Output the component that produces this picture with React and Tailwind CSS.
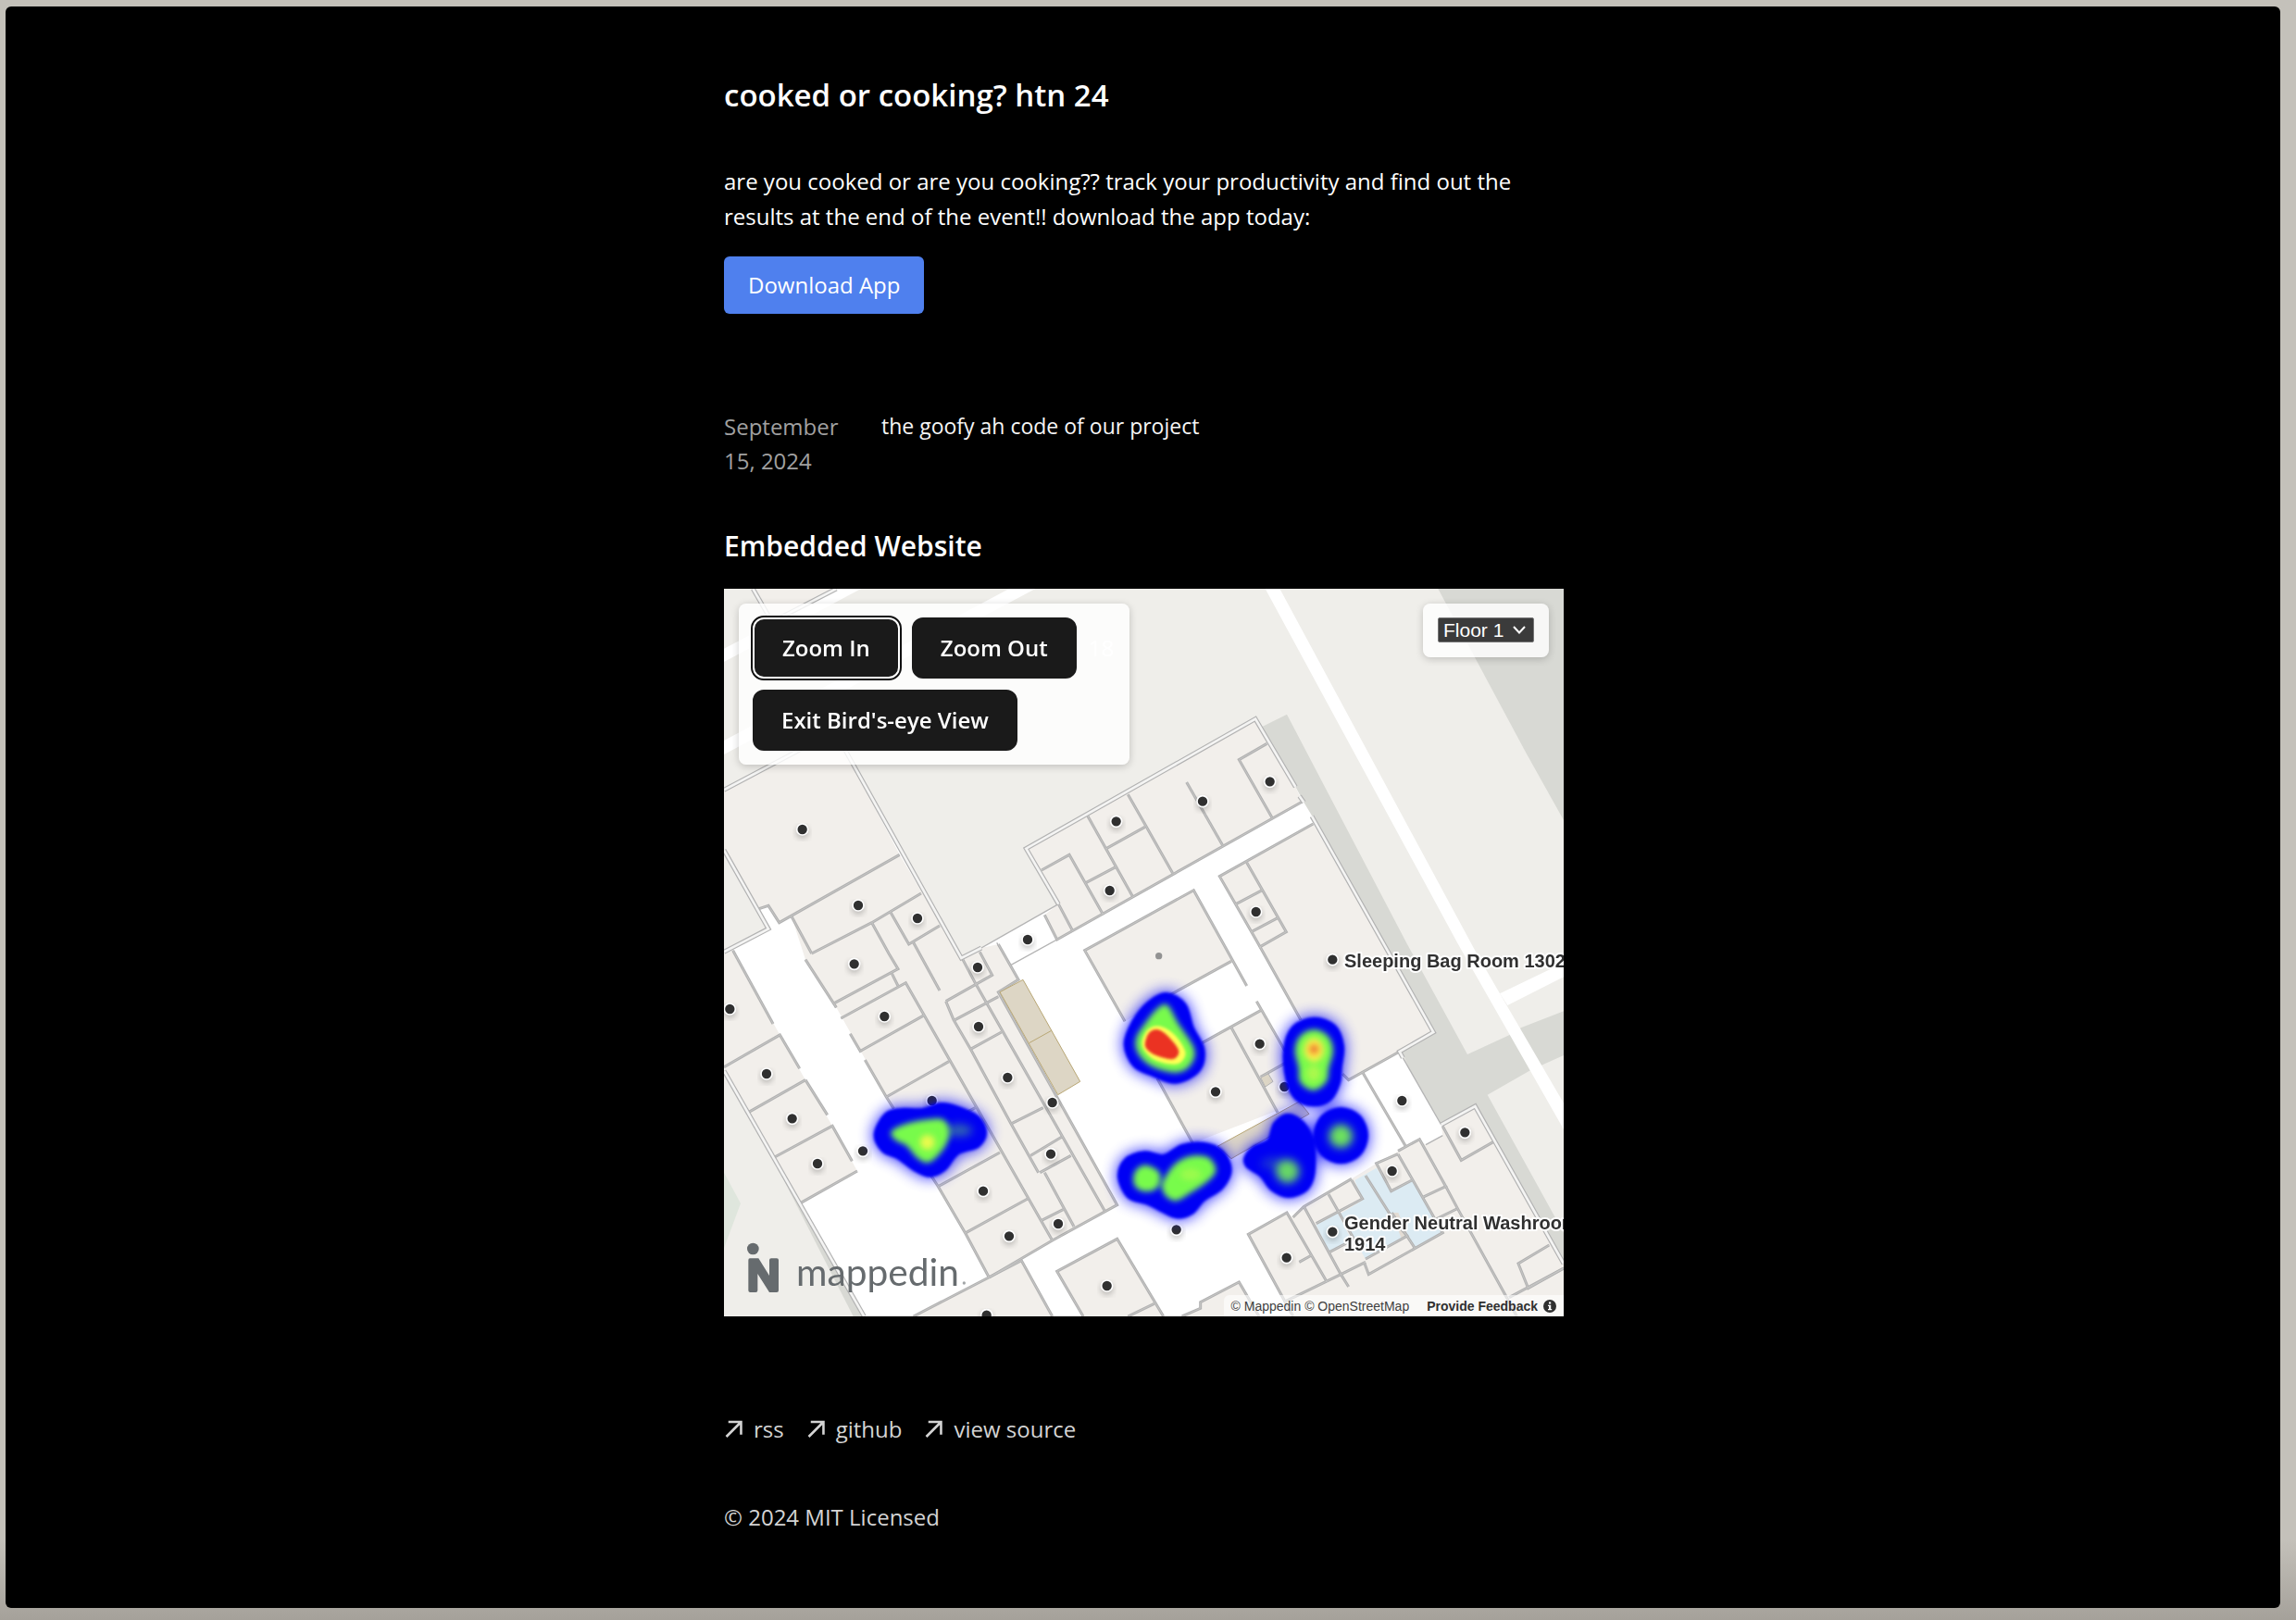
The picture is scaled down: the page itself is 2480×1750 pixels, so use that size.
import React, { useState } from "react";

// Floor plan geometry, drawn in a 2721 x 2358 viewBox
const ROOMS = [
  "94,0 144,87 174,92 350,0",
  "0,652 359,462 569,862 179,1082 144,1027 114,1037 0,847",
  "219,1062 569,862 769,1197 834,1164 889,1152 954,1267 889,1307 1274,1997 1139,2067 1064,2112 859,2232 784,2092 694,1937 526,1647 364,1357 264,1202",
  "0,1182 29,1172 179,1442 264,1592 349,1737 432,1887 249,1990 0,1552",
  "614,2358 964,2177 1064,2358",
  "1079,2212 1274,2107 1424,2358 1164,2358",
  "1484,2358 1544,2332 1544,2312 1669,2247 1734,2358",
  "979,842 1722,422 1852,642 1874,690 1079,1137 1039,1057 1084,1022",
  "1169,1172 1522,977 1650,1207 1299,1402",
  "1606,932 1909,762 2299,1437 2024,1592 2004,1572 1869,1397 1737,1170",
  "1385,1560 1739,1367 1894,1652 1519,1797",
  "1699,2092 1824,2022 1844,2037 1879,2002 2034,1912 2114,1862 2254,1784 2274,1802 2329,1772 2324,1737 2434,1677 2721,2187 2721,2358 1844,2358",
];

const WASHROOMS = [
  "2044,1917 2114,1877 2164,1952 2229,1917 2329,2087 2239,2137 2214,2097 2194,2112 2079,2172 1994,2027 2069,1982",
  "1919,2062 1989,2024 2034,2112 1962,2150",
];

const WALLS = [
  "114,1037 144,1027 179,1082 569,862",
  "219,1062 284,1182",
  "264,1202 364,1357",
  "284,1182 479,1082 639,987",
  "479,1082 534,1182 564,1232 359,1342",
  "539,1047 599,1152 699,1092",
  "614,1147 699,1302",
  "719,1337 744,1397 799,1492 929,1732 1019,1892",
  "1039,1892 1134,2067",
  "719,1337 869,1252 829,1177",
  "749,1397 889,1322",
  "774,1202 814,1277 1234,2017",
  "889,1152 954,1267 889,1307 1274,1997 1064,2112 859,2232",
  "799,1492 899,1437",
  "934,1732 1034,1682",
  "994,1837 1094,1777",
  "1024,1892 1124,1837",
  "379,1392 589,1277 1064,2112",
  "544,1247 564,1287",
  "409,1442 444,1502",
  "457,1527 526,1647 550,1685",
  "444,1497 649,1382",
  "526,1647 729,1532",
  "704,1742 814,1682",
  "670,1900 694,1937 784,2092 859,2232",
  "694,1937 894,1827",
  "784,2087 984,1977",
  "1029,2047 1099,2012",
  "29,1172 159,1410",
  "179,1442 245,1555",
  "264,1592 335,1705",
  "349,1737 415,1855",
  "432,1887 249,1990",
  "0,1550 179,1447",
  "79,1697 264,1592",
  "164,1842 349,1742",
  "614,2358 964,2177 1064,2358",
  "1164,2358 1079,2212 1274,2107 1424,2358",
  "1309,2358 1394,2317",
  "1484,2358 1544,2332 1544,2312 1669,2247 1734,2358",
  "1874,690 1079,1137 1039,1057",
  "1029,912 1119,862 1229,1057",
  "1174,952 1269,902",
  "1179,737 1324,997",
  "1239,842 1364,772",
  "1309,667 1369,772 1454,922",
  "1499,627 1616,832",
  "1759,502 1669,554 1776,742",
  "1084,1022 1129,1107",
  "1299,1402 1169,1172 1522,977 1694,1287",
  "1444,1317 1644,1207",
  "1909,762 1606,932 1737,1160 1869,1397",
  "1694,887 1822,1112 1734,1162",
  "1659,1022 1744,977",
  "1709,1112 1794,1067",
  "2189,1500 2024,1592 2004,1572",
  "1404,1587 1519,1797",
  "1549,1472 1739,1367",
  "1726,1337 1819,1500",
  "1644,1422 1794,1697",
  "1739,1582 1819,1537",
  "2069,1567 2209,1807",
  "1844,2358 1699,2092 1824,2022 1954,2247",
  "1844,2037 1879,2002 2034,1912",
  "1864,2182 1904,2160",
  "1814,2312 1999,2222 2079,2182",
  "1879,2002 1999,2222 2024,2262",
  "1959,1962 2044,2112",
  "1919,2057 2069,1977 2034,1917",
  "1962,2150 2034,2112",
  "2079,1902 2174,2052 2214,2097 2079,2172",
  "2184,1832 2114,1862 2162,1952 2229,1917",
  "2184,1832 2329,2087 2089,2222 2074,2182",
  "2164,2022 2239,2137",
  "2184,1822 2254,1784 2339,1937 2264,1972",
  "2299,2047 2374,2010",
  "2339,1937 2379,2012 2539,2302 2569,2358",
  "2544,2297 2721,2202",
  "2329,1742 2389,1852 2494,1792",
  "2674,2127 2574,2187 2606,2267 2721,2202",
];

const OUTER_WALLS = [
  "94,0 144,87",
  "364,0 174,98",
  "0,652 359,462 769,1197 834,1164",
  "0,847 144,1102 0,1177",
  "0,1562 454,2358",
  "1084,1022 979,842 1722,422 1852,642",
  "1865,672 1879,692",
  "1905,737 2299,1437 2189,1500 2200,1520",
  "2324,1737 2434,1677 2721,2187",
];

const THIN_WALLS = ["834,1164 1084,1022", "884,1147 929,1220 1079,1137", "2200,1520 2324,1737", "2274,1802 2329,1772"];

const PINS = [
  [254, 780], [435, 1026], [627, 1068], [984, 1137], [1250, 978], [1271, 754],
  [1551, 689], [1769, 625], [1724, 1047], [422, 1216], [822, 1227], [19, 1362],
  [520, 1386], [825, 1419], [138, 1572], [919, 1584], [221, 1717], [674, 1659],
  [1064, 1665], [450, 1822], [1059, 1832], [303, 1863], [840, 1952], [1083, 2058],
  [924, 2098], [1241, 2259], [851, 2354], [1972, 1202], [1736, 1475], [1593, 1630],
  [1816, 1614], [2197, 1659], [2401, 1762], [2165, 1887], [1466, 2077], [1972, 2084],
  [1823, 2168],
];

const HEAT = {
  blue: [
    [[489, 1767], [524, 1702], [574, 1687], [644, 1687], [704, 1669], [764, 1682], [824, 1712], [848, 1762], [824, 1807], [759, 1830], [714, 1884], [664, 1903], [614, 1882], [564, 1845], [514, 1822]],
    [[1434, 1312], [1494, 1347], [1519, 1422], [1554, 1492], [1539, 1562], [1464, 1600], [1390, 1577], [1329, 1547], [1299, 1477], [1325, 1402], [1375, 1340]],
    [[1912, 1392], [1979, 1417], [2006, 1482], [1999, 1552], [1994, 1602], [1964, 1657], [1909, 1674], [1852, 1652], [1824, 1592], [1816, 1492], [1844, 1420]],
    [[1999, 1684], [2060, 1710], [2084, 1772], [2060, 1834], [1999, 1860], [1938, 1834], [1914, 1772], [1938, 1710]],
    [[1829, 1704], [1879, 1732], [1909, 1792], [1912, 1892], [1889, 1947], [1829, 1970], [1774, 1947], [1739, 1902], [1694, 1872], [1689, 1842], [1719, 1807], [1764, 1787], [1784, 1732]],
    [[1279, 1907], [1300, 1850], [1364, 1826], [1424, 1837], [1484, 1804], [1554, 1797], [1614, 1822], [1642, 1882], [1614, 1942], [1554, 1982], [1519, 2022], [1467, 2037], [1410, 2012], [1370, 1992], [1310, 1972]],
  ],
  green: [
    [[545, 1762], [584, 1740], [660, 1724], [709, 1724], [727, 1762], [709, 1812], [664, 1855], [629, 1842], [594, 1802], [560, 1785]],
    [[1434, 1352], [1468, 1410], [1520, 1492], [1506, 1545], [1459, 1564], [1384, 1542], [1343, 1500], [1340, 1455], [1372, 1405], [1400, 1370]],
    [[1912, 1432], [1954, 1452], [1970, 1497], [1956, 1552], [1949, 1595], [1909, 1622], [1870, 1597], [1866, 1552], [1854, 1497], [1870, 1452]],
    [[1425, 1925], [1464, 1867], [1514, 1842], [1569, 1847], [1590, 1887], [1559, 1922], [1509, 1955], [1464, 1980], [1430, 1960]],
    [[1370, 1872], [1405, 1890], [1410, 1911], [1400, 1940], [1370, 1950], [1340, 1940], [1330, 1911], [1342, 1882]],
  ],
  yellow: [
    [[1355, 1478], [1372, 1430], [1410, 1417], [1460, 1445], [1495, 1500], [1480, 1535], [1440, 1540], [1385, 1520]],
  ],
  red: [
    [[1368, 1478], [1382, 1440], [1412, 1435], [1450, 1468], [1470, 1500], [1455, 1520], [1420, 1515], [1385, 1500]],
  ],
};

// Closed smooth curve through the given points
const smoothPath = (points) => {
  const n = points.length;
  let d = `M${points[0][0]} ${points[0][1]}`;
  for (let i = 0; i < n; i++) {
    const p0 = points[(i - 1 + n) % n];
    const p1 = points[i];
    const p2 = points[(i + 1) % n];
    const p3 = points[(i + 2) % n];
    d += `C${p1[0] + (p2[0] - p0[0]) / 6} ${p1[1] + (p2[1] - p0[1]) / 6} ${p2[0] - (p3[0] - p1[0]) / 6} ${p2[1] - (p3[1] - p1[1]) / 6} ${p2[0]} ${p2[1]}`;
  }
  return d + "Z";
};

const HeatLayer = ({ blobs, color, filter, spread = 0, opacity = 1 }) => (
  <g fill={color} stroke={color} strokeWidth={spread} filter={`url(#${filter})`} opacity={opacity}>
    {blobs.map((points, i) => (
      <path key={i} d={smoothPath(points)} />
    ))}
  </g>
);

const Lines = ({ items, color, width }) => (
  <g fill="none" stroke={color} strokeWidth={width}>
    {items.map((points) => (
      <polyline key={points} points={points} />
    ))}
  </g>
);

const FloorPlan = () => (
  <svg viewBox="0 0 2721 2358" className="block w-full h-auto" role="img" aria-label="Venue heatmap">
    <defs>
      {[5, 9, 14, 24].map((b) => (
        <filter key={b} id={`blur${b}`} x="-20%" y="-20%" width="140%" height="140%">
          <feGaussianBlur stdDeviation={b} />
        </filter>
      ))}
    </defs>

    {/* Ground and roads */}
    <rect width="2721" height="2358" fill="#efeeea" />
    <g fill="#d8d9d4">
      <polygon points="2314,0 2599,532 2721,750 2721,0" />
      <polygon points="1744,447 1824,407 2214,1152 2409,1509 2544,1447 2584,1422 2721,1369 2721,1512 2614,1560 2474,1640 2721,2087 2721,2192 2300,1740" />
      <polygon points="150,1830 419,2358 454,2358" />
      <polygon points="225,60 369,0 340,0" />
    </g>
    <polygon points="0,1892 54,1992 0,2137" fill="#dfe6dd" />
    <g fill="#ffffff">
      <polygon points="1754,0 1801,0 2439,1182 2514,1312 2721,1667 2721,1752 2379,1152" />
      <polygon points="2514,1312 2721,1212 2721,1258 2539,1350" />
      <polygon points="369,0 444,0 0,237 0,194" />
      <polygon points="924,0 1009,0 0,537 0,492" />
    </g>

    {/* Building */}
    <polygon
      fill="#ffffff"
      points="0,652 359,462 769,1197 834,1164 1084,1022 979,842 1722,422 1852,642 1879,692 1909,742 2299,1437 2189,1500 2324,1737 2434,1677 2721,2187 2721,2358 454,2358 0,1562 0,1177 144,1102 0,847"
    />
    <g fill="#f2efeb">
      {ROOMS.map((points) => (
        <polygon key={points} points={points} />
      ))}
    </g>
    <g fill="#dcebf3">
      {WASHROOMS.map((points) => (
        <polygon key={points} points={points} />
      ))}
    </g>
    <polygon points="2164,2022 2185,2022 2214,2090 2195,2105" fill="#e3dcd4" />
    <Lines items={THIN_WALLS} color="#b4b4b4" width="4" />
    <Lines items={WALLS} color="#b2b2b2" width="9" />
    <Lines items={WALLS} color="#c6c6c5" width="3" />
    <Lines items={OUTER_WALLS} color="#b2b2b2" width="15" />
    <Lines items={OUTER_WALLS} color="#f4f4f3" width="8" />
    <g fill="#ddd6c5" stroke="#b9a775" strokeWidth="3">
      <polygon points="894,1307 969,1267 1154,1597 1082,1640" />
      <polyline points="989,1472 1061,1432" />
      <polygon points="1599,1807 1864,1662 1896,1702 1644,1847" />
      <polygon points="1739,1584 1764,1572 1779,1597 1754,1614" stroke="#b4b4b4" />
    </g>

    {/* Location pins */}
    {PINS.map(([x, y]) => (
      <g key={`${x}-${y}`}>
        <circle cx={x} cy={y + 9} r="21" fill="#000000" opacity="0.22" filter="url(#blur9)" />
        <circle cx={x} cy={y} r="18" fill="#303030" stroke="#ffffff" strokeWidth="5" />
      </g>
    ))}
    <circle cx="1409" cy="1190" r="11" fill="#929292" />

    {/* Heat */}
    <HeatLayer blobs={HEAT.blue} color="#0000ff" filter="blur24" spread={16} opacity={0.8} />
    <HeatLayer blobs={HEAT.blue} color="#0000f5" filter="blur5" spread={8} />
    <HeatLayer blobs={HEAT.green} color="#78fb4c" filter="blur9" spread={8} />
    <g fill="#78fb4c" filter="url(#blur14)">
      <circle cx="1999" cy="1774" r="38" opacity="0.9" />
      <circle cx="1826" cy="1888" r="38" opacity="0.85" />
      <ellipse cx="1785" cy="1862" rx="46" ry="20" opacity="0.2" />
      <ellipse cx="760" cy="1755" rx="44" ry="20" opacity="0.4" />
    </g>
    <HeatLayer blobs={HEAT.yellow} color="#ffff54" filter="blur5" />
    <HeatLayer blobs={HEAT.red} color="#eb3323" filter="blur5" spread={8} />
    <g filter="url(#blur9)">
      <circle cx="659" cy="1794" r="24" fill="#f4fb4c" opacity="0.9" />
      <ellipse cx="1912" cy="1494" rx="32" ry="38" fill="#fff04c" />
      <circle cx="1912" cy="1492" r="18" fill="#ee8434" />
      <ellipse cx="1910" cy="1570" rx="22" ry="26" fill="#b8f84c" opacity="0.8" />
      <ellipse cx="1512" cy="1898" rx="34" ry="20" fill="#a4fb4c" opacity="0.8" />
    </g>

    <g
      fill="#303030"
      stroke="#ffffff"
      strokeWidth="12"
      strokeLinejoin="round"
      paintOrder="stroke"
      fontFamily="'Liberation Sans', Arial, sans-serif"
      fontSize="60"
      fontWeight="700"
    >
      <text x="2010" y="1226">Sleeping Bag Room 1302</text>
      <text x="2010" y="2075">Gender Neutral Washroom</text>
      <text x="2010" y="2146">1914</text>
    </g>

    {/* Logo */}
    <g fill="#666b6e">
      <circle cx="94" cy="2139" r="19" />
      <path
        d="M84 2170H112L147 2226V2176Q147 2170 153 2170H171Q177 2170 177 2176V2274Q177 2280 171 2280H147L109 2220V2274Q109 2280 103 2280H85Q79 2280 79 2274V2176Q79 2170 84 2170Z"
      />
      <text x="234" y="2258" fontFamily="Lato, sans-serif" fontSize="122">
        mappedin
      </text>
      <circle cx="778" cy="2250" r="5" opacity="0.6" />
    </g>
  </svg>
);

const MapButton = ({ children, focused, onClick }) => (
  <button
    type="button"
    onClick={onClick}
    className={
      focused
        ? "h-[66px] px-[30px] rounded-xl bg-[#1a1a1a] text-white font-semibold border-2 border-white outline-2 outline-[#101010]"
        : "h-[66px] px-[29px] rounded-xl bg-[#1a1a1a] text-white font-semibold border-2 border-[#1a1a1a]"
    }
  >
    {children}
  </button>
);

const VenueMap = () => {
  const [floor, setFloor] = useState("1");
  const [zoom, setZoom] = useState(18);

  return (
    <div className="relative overflow-hidden bg-[#efeeea]">
      <FloorPlan />

      <div className="absolute top-4 left-4 w-[422px] py-[15px] pl-[15px] pr-1 flex flex-wrap items-center gap-x-[13px] gap-y-3 rounded-lg bg-white/80 shadow-[0_2px_8px_rgba(0,0,0,0.2)] text-2xl">
        <MapButton focused onClick={() => setZoom(zoom + 1)}>
          Zoom In
        </MapButton>
        <MapButton onClick={() => setZoom(zoom - 1)}>Zoom Out</MapButton>
        <span className="text-white">{zoom}</span>
        <MapButton>Exit Bird's-eye View</MapButton>
      </div>

      <div className="absolute top-4 right-4 px-4 pt-[15px] pb-4 rounded-lg bg-white/80 shadow-[0_2px_8px_rgba(0,0,0,0.2)]">
        <div className="relative">
          <select
            aria-label="Floor"
            value={floor}
            onChange={(e) => setFloor(e.target.value)}
            className="block appearance-none w-[104px] h-[27px] pl-[5px] rounded-xs border border-[#767676] bg-[#3b3b3b] text-white text-[21px] leading-6 font-['Liberation_Sans',Arial,sans-serif]"
          >
            <option value="1">Floor 1</option>
            <option value="2">Floor 2</option>
            <option value="3">Floor 3</option>
          </select>
          <svg viewBox="0 0 14 9" className="absolute right-[9px] top-[9px] w-3.5 h-[9px] pointer-events-none" fill="none" stroke="#ffffff" strokeWidth="2">
            <path d="M1 1L7 7.500L13 1" />
          </svg>
        </div>
      </div>

      <div className="absolute bottom-0 right-0 h-[23px] px-2 flex items-center gap-[19px] rounded-tl-md bg-white/60 text-sm text-[#404040] font-['Liberation_Sans',Arial,sans-serif]">
        <span>© Mappedin © OpenStreetMap</span>
        <a href="#feedback" className="flex items-center gap-1.5 font-bold text-[#303030]">
          Provide Feedback
          <svg viewBox="0 0 14 14" className="w-3.5 h-3.5">
            <circle cx="7" cy="7" r="7" fill="#303030" />
            <path d="M6 2.500H8.200V4.500H6ZM5 5.800H8.200V10H9.200V11.300H5V10H6V7H5Z" fill="#ffffff" />
          </svg>
        </a>
      </div>
    </div>
  );
};

const ArrowIcon = () => (
  <svg viewBox="0 0 12 12" className="w-5 h-5" fill="currentColor">
    <path d="M2.071 11.349L0.963 10.242L9.202 1.989H2.838L2.852 0.455H11.844V9.460H10.296L10.310 3.097L2.071 11.349Z" />
  </svg>
);

const FOOTER_LINKS = ["rss", "github", "view source"];

const App = () => {
  return (
    <div className="min-h-screen flex pt-[7px] pl-[6px] pr-[17px] pb-[13px] bg-linear-to-b from-[#c4c1ba] from-95% to-[#a5a19a] font-['Open_Sans','Noto_Sans',sans-serif]">
      <div className="flex-1 rounded-md bg-black text-white text-2xl leading-[38px]">
        <main className="w-full max-w-[909px] mx-auto pt-[76px] pl-0.5">
          <h1 className="text-[33px] leading-10 font-semibold">cooked or cooking? htn 24</h1>
          <p className="mt-[54px]">
            are you cooked or are you cooking?? track your productivity and find out the results at the end of the
            event!! download the app today:
          </p>
          <button type="button" className="block mt-6 h-[62px] px-[26px] rounded-md bg-[#4f80ee] text-white">
            Download App
          </button>

          <a href="#post" className="mt-[103px] flex leading-[37px]">
            <span className="w-[170px] pr-6 text-[#a0a0a0]">September 15, 2024</span>
            <span className="text-[23px] text-[#f5f5f5]">the goofy ah code of our project</span>
          </a>

          <h2 className="mt-[54px] mb-[26px] text-3xl leading-10 font-semibold">Embedded Website</h2>
          <VenueMap />

          <footer className="mt-[103px] text-[#d4d4d4]">
            <ul className="flex gap-6">
              {FOOTER_LINKS.map((link) => (
                <li key={link}>
                  <a href={`#${link.replace(" ", "-")}`} className="flex items-center gap-3">
                    <ArrowIcon />
                    {link}
                  </a>
                </li>
              ))}
            </ul>
            <p className="mt-[57px]">© 2024 MIT Licensed</p>
          </footer>
        </main>
      </div>
    </div>
  );
};

export default App;
